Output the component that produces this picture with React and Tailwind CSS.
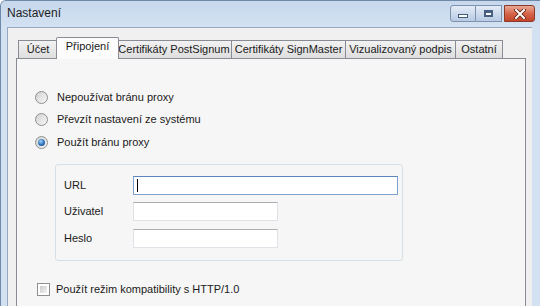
import React from 'react';

const font = { fontFamily: '"Liberation Sans", Arial, sans-serif' };

function Radio({ checked, label, rowClass }) {
  return (
    <div className={`flex items-center gap-[9px] pl-[18px] ${rowClass}`}>
      <div className="w-[13px] h-[13px] rounded-full border border-[#8e8f8f] bg-gradient-to-br from-[#d2d2d2] to-[#f7f7f7] flex items-center justify-center">
        {checked && (
          <div className="w-[7px] h-[7px] rounded-full bg-[radial-gradient(circle_at_40%_35%,#9fd3f7,#2a6fb8_55%,#153d73)]" />
        )}
      </div>
      <span className="text-[11px] text-[#1a1a1a] leading-none">{label}</span>
    </div>
  );
}

function Tab({ label, width, selected, first }) {
  if (selected) {
    return (
      <div
        className={`relative z-10 -mx-[2px] -mb-px h-[22px] border border-b-0 border-[#898c95] bg-[#fcfcfc] flex items-start justify-center pt-[3px] text-[11px] text-[#1a1a1a] leading-none rounded-t-[2px]`}
        style={{ width }}
      >
        {label}
      </div>
    );
  }
  return (
    <div
      className={`h-[18px] border-t border-r ${first ? 'border-l' : ''} border-[#898c95] bg-gradient-to-b from-[#f2f2f2] to-[#dedede] flex items-center justify-center text-[11px] text-[#1a1a1a] leading-none`}
      style={{ width }}
    >
      {label}
    </div>
  );
}

function Field({ label, wide, focused, rowClass }) {
  return (
    <div className={`flex items-center ${rowClass}`}>
      <span className="w-[69px] text-[11px] text-[#1a1a1a] leading-none">{label}</span>
      <div
        className={`h-[19px] bg-white border ${focused ? 'border-[#7da2ce] border-t-[#5c85b8]' : 'border-[#dfe3e8] border-t-[#abadb3]'} flex items-center pl-[3px] ${wide ? 'w-[265px]' : 'w-[145px]'}`}
      >
        {focused && <div className="w-px h-[13px] bg-black" />}
      </div>
    </div>
  );
}

export default function App() {
  return (
    <div
      className="w-[540px] h-[306px] overflow-hidden flex flex-col bg-[#d4e1f1] border-l border-t border-[#6f8aa9] rounded-tl-[6px]"
      style={font}
    >
      {/* title bar */}
      <div className="h-[26px] shrink-0 flex items-start justify-between bg-gradient-to-b from-[#c7d8ed] to-[#d3e1f1]">
        <span className="pl-[6px] pt-[6px] text-[12px] text-[#1e1e1e] leading-none">Nastavení</span>
        <div className="flex pt-[4px] pr-[5px]">
          <div className="w-[26px] h-[17px] rounded-l-[3px] border border-[#7c91ad] bg-gradient-to-b from-[#e4ecf7] to-[#b8cbe3] flex items-end justify-center pb-[3px]">
            <div className="w-[10px] h-[4px] bg-white border border-[#435a79]" />
          </div>
          <div className="w-[26px] h-[17px] border border-l-0 border-[#7c91ad] bg-gradient-to-b from-[#e4ecf7] to-[#b8cbe3] flex items-center justify-center">
            <div className="w-[9px] h-[7px] border-[2px] border-t-[3px] border-[#48607f] bg-white" />
          </div>
          <div className="ml-[2px] w-[31px] h-[17px] rounded-r-[3px] border border-[#8b3a2a] bg-gradient-to-b from-[#e9a895] via-[#d5664b] to-[#c2442a] flex items-center justify-center">
            <svg width="12" height="10" viewBox="0 0 12 10">
              <path d="M2 1 L10 9 M10 1 L2 9" stroke="#5a1d12" strokeWidth="3.6" strokeLinecap="square" />
              <path d="M2 1 L10 9 M10 1 L2 9" stroke="#ffffff" strokeWidth="2" strokeLinecap="square" />
            </svg>
          </div>
        </div>
      </div>

      {/* client area */}
      <div className="flex-1 ml-[6px] mr-[8px] border-l border-t border-[#95a8c0] bg-[#f0f0f0] pl-[8px] pt-[8px]">
        <div className="flex items-end h-[22px] pl-[2px]">
          <Tab label="Účet" width={40} first />
          <Tab label="Připojení" width={63} selected />
          <Tab label="Certifikáty PostSignum" width={115} />
          <Tab label="Certifikáty SignMaster" width={114} />
          <Tab label="Vizualizovaný podpis" width={110} />
          <Tab label="Ostatní" width={47} />
        </div>

        <div className="w-[510px] h-[260px] border border-[#898c95] bg-[#f6f6f6] pt-[27px]">
          <Radio label="Nepoužívat bránu proxy" rowClass="h-[22px]" />
          <Radio label="Převzít nastavení ze systému" rowClass="h-[23px]" />
          <Radio label="Použít bránu proxy" checked rowClass="h-[22px]" />

          <div className="ml-[38px] mt-[11px] w-[348px] h-[97px] border border-[#d5dfe5] rounded-[3px] pl-[8px] pt-[11px] flex flex-col">
            <Field label="URL" wide focused rowClass="" />
            <Field label="Uživatel" rowClass="mt-[7px]" />
            <Field label="Heslo" rowClass="mt-[8px]" />
          </div>

          <div className="flex items-center gap-[6px] pl-[20px] mt-[22px]">
            <div className="w-[13px] h-[13px] border border-[#8e8f8f] bg-white p-[2px]">
              <div className="w-full h-full bg-gradient-to-br from-[#cbcbcb] to-[#f4f4f4]" />
            </div>
            <span className="text-[11px] text-[#1a1a1a] leading-none">Použít režim kompatibility s HTTP/1.0</span>
          </div>
        </div>
      </div>
    </div>
  );
}
